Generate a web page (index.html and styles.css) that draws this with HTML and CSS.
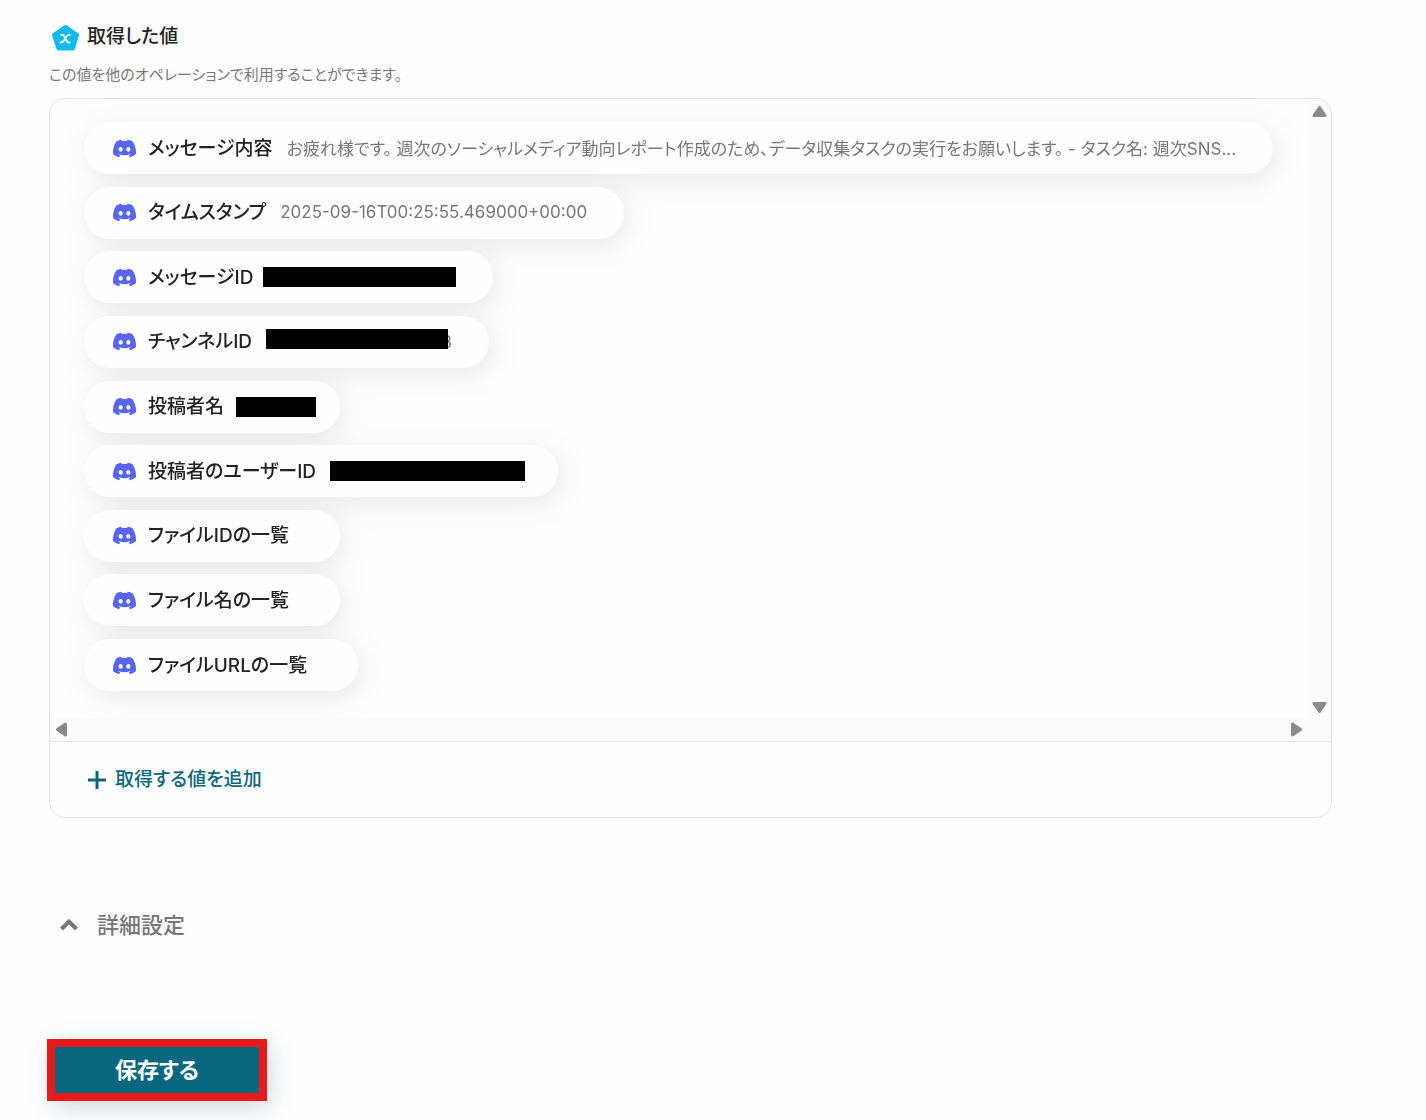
FILE: index.html
```
<!DOCTYPE html>
<html lang="ja">
<head>
    <meta charset="utf-8">
    <title>取得した値</title>
    <meta name="viewport" content="width=device-width, initial-scale=1">
    <link rel="stylesheet" href="styles.css">
</head>
<body>
    <svg width="0" height="0" class="sprite" aria-hidden="true">
        <symbol id="discord" viewBox="0 0 24 24">
            <path d="M20.317 4.37a19.791 19.791 0 0 0-4.885-1.515.074.074 0 0 0-.079.037c-.21.375-.444.864-.608 1.25a18.27 18.27 0 0 0-5.487 0 12.64 12.64 0 0 0-.617-1.25.077.077 0 0 0-.079-.037A19.736 19.736 0 0 0 3.677 4.37a.07.07 0 0 0-.032.027C.533 9.046-.32 13.58.099 18.057a.082.082 0 0 0 .031.057 19.9 19.9 0 0 0 5.993 3.03.078.078 0 0 0 .084-.028c.462-.63.874-1.295 1.226-1.994a.076.076 0 0 0-.041-.106 13.107 13.107 0 0 1-1.872-.892.077.077 0 0 1-.008-.128c.126-.094.252-.192.372-.291a.074.074 0 0 1 .077-.01c3.928 1.793 8.18 1.793 12.062 0a.074.074 0 0 1 .078.009c.12.099.246.198.373.292a.077.077 0 0 1-.006.127 12.299 12.299 0 0 1-1.873.892.077.077 0 0 0-.041.107c.36.698.772 1.362 1.225 1.993a.076.076 0 0 0 .084.028 19.839 19.839 0 0 0 6.002-3.03.077.077 0 0 0 .032-.054c.5-5.177-.838-9.674-3.549-13.66a.061.061 0 0 0-.031-.03zM8.02 15.33c-1.183 0-2.157-1.085-2.157-2.419 0-1.333.956-2.419 2.157-2.419 1.21 0 2.176 1.096 2.157 2.42 0 1.333-.956 2.418-2.157 2.418zm7.975 0c-1.183 0-2.157-1.085-2.157-2.419 0-1.333.955-2.419 2.157-2.419 1.21 0 2.176 1.096 2.157 2.42 0 1.333-.946 2.418-2.157 2.418z"/>
        </symbol>
    </svg>
    <main class="container">
        <header class="heading">
            <svg class="heading-icon" viewBox="0 0 28 28" aria-hidden="true">
                <path d="M14.500 3 26 11 22 24.500H7.500L3 11Z" fill="#10b9ee" stroke="#10b9ee" stroke-width="4" stroke-linejoin="round"/>
                <path d="M10 10.800h1.500c.8 0 1.200.4 1.600 1.100l3 5.600c.4.700.8 1 1.500 1h1M18.800 10.800c-1.700-.1-2.500.5-3.300 1.700l-2.600 4.200c-.8 1.300-1.600 1.900-3.400 1.800" fill="none" stroke="#fff" stroke-width="1.800" stroke-linecap="round"/>
            </svg>
            <h2>取得した値</h2>
        </header>
        <p class="description">この値を他のオペレーションで利用することができます。</p>

        <section class="card">
            <div class="scroll-area">
                <ul class="value-list">
                    <li class="pill">
                        <svg class="pill-icon"><use href="#discord"/></svg>
                        <span class="name">メッセージ内容</span>
                        <span class="value">お疲れ様です。 週次のソーシャルメディア動向レポート作成のため、データ収集タスクの実行をお願いします。 - タスク名: 週次SNS...</span>
                    </li>
                    <li class="pill">
                        <svg class="pill-icon"><use href="#discord"/></svg>
                        <span class="name">タイムスタンプ</span>
                        <span class="value">2025-09-16T00:25:55.469000+00:00</span>
                    </li>
                    <li class="pill">
                        <svg class="pill-icon"><use href="#discord"/></svg>
                        <span class="name">メッセージID</span>
                        <span class="value hidden-value message-id"></span>
                    </li>
                    <li class="pill">
                        <svg class="pill-icon"><use href="#discord"/></svg>
                        <span class="name">チャンネルID</span>
                        <span class="value hidden-value channel-id">8</span>
                    </li>
                    <li class="pill">
                        <svg class="pill-icon"><use href="#discord"/></svg>
                        <span class="name">投稿者名</span>
                        <span class="value hidden-value user-name"></span>
                    </li>
                    <li class="pill">
                        <svg class="pill-icon"><use href="#discord"/></svg>
                        <span class="name">投稿者のユーザーID</span>
                        <span class="value hidden-value user-id"></span>
                    </li>
                    <li class="pill">
                        <svg class="pill-icon"><use href="#discord"/></svg>
                        <span class="name">ファイルIDの一覧</span>
                        <span class="value"></span>
                    </li>
                    <li class="pill">
                        <svg class="pill-icon"><use href="#discord"/></svg>
                        <span class="name">ファイル名の一覧</span>
                        <span class="value"></span>
                    </li>
                    <li class="pill">
                        <svg class="pill-icon"><use href="#discord"/></svg>
                        <span class="name">ファイルURLの一覧</span>
                        <span class="value"></span>
                    </li>
                </ul>
                <div class="bar bar-vertical" aria-hidden="true">
                    <svg width="15" height="11" viewBox="0 0 15 11"><path d="M7.500 1.500 13 9.500H2Z"/></svg>
                    <svg width="15" height="11" viewBox="0 0 15 11"><path d="M7.500 9.500 13 1.500H2Z"/></svg>
                </div>
                <div class="bar bar-horizontal" aria-hidden="true">
                    <svg width="11" height="15" viewBox="0 0 11 15"><path d="M1.500 7.500 9.500 2V13Z"/></svg>
                    <svg width="11" height="15" viewBox="0 0 11 15"><path d="M9.500 7.500 1.500 2V13Z"/></svg>
                </div>
                <div class="bar-corner"></div>
            </div>
            <div class="card-footer">
                <button type="button" class="add-btn">
                    <svg width="18" height="18" viewBox="0 0 18 18" aria-hidden="true"><path d="M9 0v18M0 9h18"/></svg>
                    <span>取得する値を追加</span>
                </button>
            </div>
        </section>

        <button type="button" class="toggle-btn">
            <svg width="20" height="14" viewBox="0 0 20 14" aria-hidden="true"><path d="M2.500 11 10 3.500l7.500 7.500"/></svg>
            <span>詳細設定</span>
        </button>

        <button type="submit" class="save-btn">保存する</button>
    </main>
</body>
</html>
```
FILE: styles.css
```
* {
    box-sizing: border-box;
}

body {
    font-family: Inter, "Noto Sans CJK JP", sans-serif;
    font-feature-settings: "palt";
    background-color: #fefefe;
    color: #222;
    margin: 0;
}

button {
    font-family: inherit;
    font-feature-settings: inherit;
    cursor: pointer;
}

.sprite {
    position: absolute;
}

.container {
    display: flex;
    flex-direction: column;
    align-items: flex-start;
    padding: 21px 94px 19px 49px;
}

.heading {
    display: flex;
    align-items: center;
    height: 32px;
    gap: 8px;
    padding-left: 2px;
}

.heading-icon {
    width: 28px;
    height: 28px;
    margin-top: 2px;
}

.heading h2 {
    font-size: 19px;
    font-weight: 500;
    line-height: 32px;
    margin: 0;
}

.description {
    font-size: 15px;
    line-height: 20px;
    color: #777;
    margin: 12px 0 13px;
}

.card {
    width: 100%;
    border: 1px solid #e2e2e2;
    border-radius: 16px;
    overflow: hidden;
}

.scroll-area {
    display: grid;
    grid-template-columns: minmax(0, 1fr) 23px;
    grid-template-rows: auto 23px;
    border-bottom: 1px solid #e2e2e2;
}

.value-list {
    display: flex;
    flex-direction: column;
    align-items: flex-start;
    justify-content: space-between;
    min-height: 619px;
    list-style: none;
    margin: 0;
    padding: 23px 34px 27px;
    filter: drop-shadow(4px 6px 14px rgba(0, 0, 0, 0.09));
}

.pill {
    display: flex;
    align-items: center;
    max-width: 100%;
    height: 52px;
    padding: 0 37px 0 29px;
    background-color: #fefefe;
    border-radius: 26px;
}

.pill-icon {
    flex: none;
    width: 23px;
    height: 23px;
    margin-right: 12px;
    fill: #5865f2;
}

.name {
    flex: none;
    font-size: 19px;
    font-weight: 500;
    margin-right: 14px;
    padding-bottom: 4px;
}

.value {
    font-size: 17px;
    color: #777;
    white-space: nowrap;
    padding-bottom: 2px;
}

.hidden-value {
    position: relative;
    height: 20px;
    line-height: 20px;
    text-align: right;
    padding: 0;
}

/* black bar laid over the private part of the value */
.hidden-value::after {
    content: "";
    position: absolute;
    top: 0;
    bottom: 0;
    left: 0;
    right: 0;
    background-color: #000;
}

.message-id {
    width: 189px;
}

.message-id::after {
    left: -4px;
}

.channel-id {
    width: 186px;
}

.channel-id::after {
    top: -3px;
    bottom: 3px;
    right: 4px;
}

.user-name {
    width: 65px;
}

.user-name::after {
    left: -2px;
    right: -13px;
}

.user-id {
    width: 191px;
}

.user-id::after {
    right: -4px;
}

.bar {
    display: flex;
    align-items: center;
    justify-content: space-between;
    background-color: #fbfbfb;
}

.bar svg {
    fill: #8b8b8b;
    stroke: #8b8b8b;
    stroke-width: 3;
    stroke-linejoin: round;
}

.bar-vertical {
    flex-direction: column;
    padding: 7px 0 5px;
}

.bar-horizontal {
    padding: 0 6px;
}

.bar-corner {
    background-color: #fbfbfb;
}

.card-footer {
    display: flex;
    align-items: center;
    height: 75px;
    padding: 0 38px;
}

.add-btn {
    display: flex;
    align-items: center;
    gap: 9px;
    padding: 0;
    border: none;
    background: none;
    color: #0b6780;
    font-size: 19px;
    font-weight: 500;
}

.add-btn svg {
    fill: none;
    stroke: currentColor;
    stroke-width: 3;
}

.add-btn span,
.toggle-btn span {
    padding-bottom: 4px;
}

.toggle-btn {
    display: flex;
    align-items: center;
    gap: 18px;
    height: 40px;
    margin: 87px 0 94px;
    padding: 0 10px;
    border: none;
    background: none;
    color: #777;
    font-size: 22px;
    font-weight: 500;
}

.toggle-btn svg {
    fill: none;
    stroke: currentColor;
    stroke-width: 4;
}

.save-btn {
    width: 220px;
    height: 62px;
    margin-left: -2px;
    padding-bottom: 5px;
    border: 8px solid #e71a1c;
    background-color: #0b6780;
    color: #fff;
    font-size: 22px;
    font-weight: 700;
    box-shadow: 4px 6px 24px rgba(30, 60, 80, 0.2);
}
```
